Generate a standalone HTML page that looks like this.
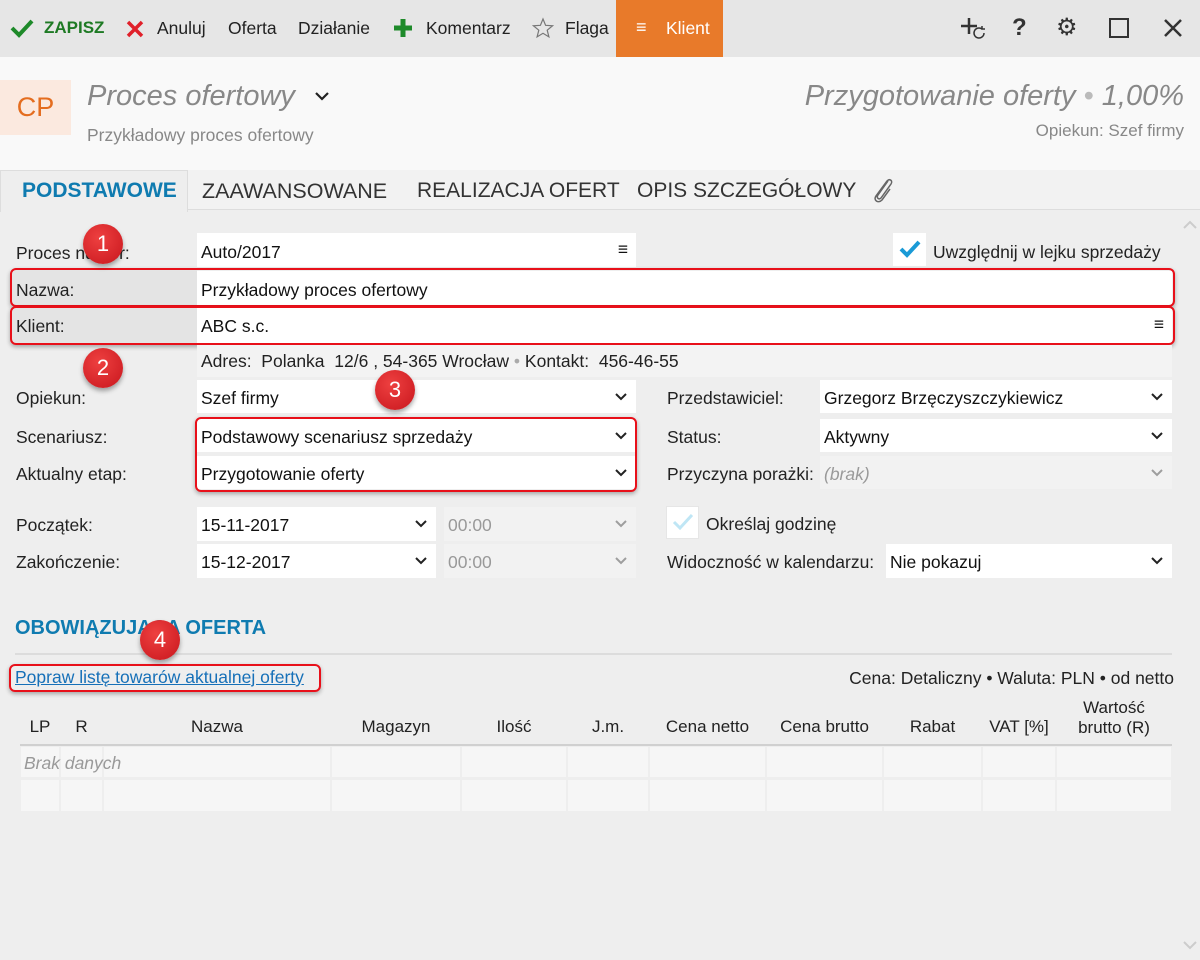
<!DOCTYPE html>
<html><head><meta charset="utf-8"><style>
*{box-sizing:border-box;margin:0;padding:0}
body{width:1200px;height:960px;overflow:hidden;background:#eeeeee;font-family:"Liberation Sans",sans-serif;font-size:17.5px;color:#222;position:relative}
.a{position:absolute;white-space:nowrap}
.tb{top:0;left:0;width:1200px;height:57px;background:#e6e6e6}
.inp{position:absolute;background:#fff;height:34px;padding:8px 4px 0;font-size:17.5px;color:#111;white-space:nowrap}
.dis{background:#f2f2f2;color:#999}
.chev{position:absolute;right:8px;top:8px}
.lbl{position:absolute;font-size:17.5px;color:#222;white-space:nowrap}
.red{position:absolute;border:2px solid #e8101a;border-radius:6px;box-shadow:0 2px 4px rgba(0,0,0,.3)}
.circ{position:absolute;width:40px;height:40px;border-radius:50%;background:radial-gradient(circle at 40% 35%,#ee4040,#c8161d);color:#fff;font-size:22px;text-align:center;line-height:40px;box-shadow:0 3px 5px rgba(0,0,0,.35)}
.th{position:absolute;top:717px;font-size:17px;text-align:center}
.cell{position:absolute;background:#f6f6f6}
</style></head><body>
<div class="a tb"></div>
<svg class="a" style="left:10px;top:18px" width="24" height="20"><path d="M2 10 L9 17 L22 3" stroke="#1e8a2a" stroke-width="4" fill="none"/></svg>
<div class="a" style="left:44px;top:18px;color:#1e7a24;font-weight:bold;font-size:17px">ZAPISZ</div>
<svg class="a" style="left:126px;top:20px" width="18" height="18"><path d="M2 2L16 16M16 2L2 16" stroke="#e0202a" stroke-width="3.5"/></svg>
<div class="a" style="left:157px;top:18px">Anuluj</div>
<div class="a" style="left:228px;top:18px">Oferta</div>
<div class="a" style="left:298px;top:18px">Działanie</div>
<svg class="a" style="left:393px;top:18px" width="20" height="20"><path d="M10 1V19M1 10H19" stroke="#1e8a2a" stroke-width="5"/></svg>
<div class="a" style="left:426px;top:18px">Komentarz</div>
<svg class="a" style="left:532px;top:17px" width="22" height="22"><path d="M11 2L13.6 8.3 20.5 8.8 15.2 13.2 16.9 19.9 11 16.3 5.1 19.9 6.8 13.2 1.5 8.8 8.4 8.3Z" stroke="#777" stroke-width="1.2" fill="none"/></svg>
<div class="a" style="left:565px;top:18px">Flaga</div>
<div class="a" style="left:616px;top:0;width:107px;height:57px;background:#e87a2a"></div>
<div class="a" style="left:636px;top:17px;color:#fff;font-size:18px">≡</div>
<div class="a" style="left:666px;top:18px;color:#fff">Klient</div>
<svg class="a" style="left:960px;top:16px" width="28" height="26"><path d="M9 2V18M1 10H17" stroke="#333" stroke-width="2.5"/><path d="M24 17a5 5 0 1 1-2-4M22 10v3h3" stroke="#333" stroke-width="1.5" fill="none"/></svg>
<div class="a" style="left:1012px;top:14px;font-size:24px;font-weight:bold;color:#333">?</div>
<div class="a" style="left:1056px;top:13px;font-size:24px;color:#333">⚙</div>
<div class="a" style="left:1109px;top:18px;width:20px;height:20px;border:2.5px solid #333"></div>
<svg class="a" style="left:1163px;top:18px" width="20" height="20"><path d="M2 2L18 18M18 2L2 18" stroke="#333" stroke-width="2.5"/></svg>

<div class="a" style="left:0;top:57px;width:1200px;height:113px;background:#f9f9f9"></div>
<div class="a" style="left:0;top:80px;width:71px;height:55px;background:#fbe9df;color:#e46d1f;font-size:27px;text-align:center;line-height:55px">CP</div>
<div class="a" style="left:87px;top:80px;font-size:29px;font-style:italic;color:#888">Proces ofertowy</div>
<svg class="a" style="left:314px;top:90px" width="16" height="12"><path d="M2 3L8 9 14 3" stroke="#222" stroke-width="2.2" fill="none"/></svg>
<div class="a" style="left:87px;top:125px;font-size:17.5px;color:#888">Przykładowy proces ofertowy</div>
<div class="a" style="right:16px;top:80px;font-size:29px;font-style:italic;color:#888">Przygotowanie oferty <span style="color:#bbb">•</span> 1,00%</div>
<div class="a" style="right:16px;top:121px;font-size:17px;color:#888">Opiekun: Szef firmy</div>

<div class="a" style="left:0;top:170px;width:1200px;height:40px;background:#f2f2f2;border-bottom:1px solid #ddd"></div>
<div class="a" style="left:0;top:170px;width:188px;height:42px;background:#eeeeee;border:1px solid #ddd;border-bottom:none"></div>
<div class="a" style="left:22px;top:179px;font-size:21px;font-weight:bold;color:#0f7bb0">PODSTAWOWE</div>
<div class="a" style="left:202px;top:179px;font-size:21.5px;color:#333">ZAAWANSOWANE</div>
<div class="a" style="left:417px;top:179px;font-size:21px;color:#333">REALIZACJA OFERT</div>
<div class="a" style="left:637px;top:179px;font-size:21px;color:#333">OPIS SZCZEGÓŁOWY</div>
<svg class="a" style="left:870px;top:176px" width="26" height="28"><path d="M18 5L8 19C6 22 9 24 11 22L21 8C23 5 20 2 17 5L6 20C3 24 8 28 12 24L20 13" stroke="#666" stroke-width="1.5" fill="none"/></svg>

<svg class="a" style="left:1182px;top:220px" width="16" height="10"><path d="M2 8L8 2 14 8" stroke="#ccc" stroke-width="2" fill="none"/></svg>
<svg class="a" style="left:1182px;top:940px" width="16" height="10"><path d="M2 2L8 8 14 2" stroke="#ccc" stroke-width="2" fill="none"/></svg>

<div class="lbl" style="left:16px;top:243px">Proces numer:</div>
<div class="inp" style="left:197px;top:233px;width:439px;padding-top:9px">Auto/2017<span class="chev" style="top:6px">≡</span></div>
<div class="a" style="left:893px;top:233px;width:33px;height:33px;background:#fff"></div>
<svg class="a" style="left:898px;top:238px" width="24" height="22"><path d="M3 11L9 17 21 4" stroke="#1a9ad6" stroke-width="4" fill="none"/></svg>
<div class="lbl" style="left:933px;top:242px">Uwzględnij w lejku sprzedaży</div>

<div class="a" style="left:12px;top:270px;width:185px;height:35px;background:#e4e4e4"></div>
<div class="lbl" style="left:16px;top:280px">Nazwa:</div>
<div class="inp" style="left:197px;top:271px;width:975px;height:34px;padding-top:9px">Przykładowy proces ofertowy</div>
<div class="red" style="left:10px;top:268px;width:1165px;height:39px"></div>

<div class="a" style="left:12px;top:308px;width:185px;height:35px;background:#e4e4e4"></div>
<div class="lbl" style="left:16px;top:316px">Klient:</div>
<div class="inp" style="left:197px;top:308px;width:975px;height:35px">ABC s.c.<span class="chev" style="top:6px">≡</span></div>
<div class="red" style="left:10px;top:306px;width:1165px;height:39px"></div>

<div class="a" style="left:197px;top:345px;width:975px;height:32px;background:#f3f3f3"></div>
<div class="lbl" style="left:201px;top:351px">Adres:&nbsp; Polanka&nbsp; 12/6 , 54-365 Wrocław <span style="color:#aaa">•</span> Kontakt:&nbsp; 456-46-55</div>

<svg width="0" height="0" style="position:absolute"><defs><path id="cv" d="M2 3L7 8 12 3" stroke="#222" stroke-width="2" fill="none"/></defs></svg>

<div class="lbl" style="left:16px;top:388px">Opiekun:</div>
<div class="inp" style="left:197px;top:380px;width:439px;height:33px">Szef firmy<svg class="chev" style="top:11px" width="14" height="10"><use href="#cv"/></svg></div>
<div class="lbl" style="left:16px;top:427px">Scenariusz:</div>
<div class="inp" style="left:197px;top:419px;width:439px;height:33px">Podstawowy scenariusz sprzedaży<svg class="chev" style="top:11px" width="14" height="10"><use href="#cv"/></svg></div>
<div class="lbl" style="left:16px;top:464px">Aktualny etap:</div>
<div class="inp" style="left:197px;top:456px;width:439px;height:33px">Przygotowanie oferty<svg class="chev" style="top:11px" width="14" height="10"><use href="#cv"/></svg></div>
<div class="red" style="left:195px;top:417px;width:442px;height:75px"></div>

<div class="lbl" style="left:667px;top:388px">Przedstawiciel:</div>
<div class="inp" style="left:820px;top:380px;width:352px;height:33px">Grzegorz Brzęczyszczykiewicz<svg class="chev" style="top:11px" width="14" height="10"><use href="#cv"/></svg></div>
<div class="lbl" style="left:667px;top:427px">Status:</div>
<div class="inp" style="left:820px;top:419px;width:352px;height:33px">Aktywny<svg class="chev" style="top:11px" width="14" height="10"><use href="#cv"/></svg></div>
<div class="lbl" style="left:667px;top:464px">Przyczyna porażki:</div>
<div class="inp dis" style="left:820px;top:456px;width:352px;height:33px;font-style:italic">(brak)<svg class="chev" style="top:11px;opacity:.4" width="14" height="10"><use href="#cv"/></svg></div>

<div class="lbl" style="left:16px;top:515px">Początek:</div>
<div class="inp" style="left:197px;top:507px;width:239px;height:34px">15-11-2017<svg class="chev" style="top:11px" width="14" height="10"><use href="#cv"/></svg></div>
<div class="inp dis" style="left:444px;top:507px;width:192px;height:34px">00:00<svg class="chev" style="top:11px;opacity:.4" width="14" height="10"><use href="#cv"/></svg></div>
<div class="lbl" style="left:16px;top:552px">Zakończenie:</div>
<div class="inp" style="left:197px;top:544px;width:239px;height:34px">15-12-2017<svg class="chev" style="top:11px" width="14" height="10"><use href="#cv"/></svg></div>
<div class="inp dis" style="left:444px;top:544px;width:192px;height:34px">00:00<svg class="chev" style="top:11px;opacity:.4" width="14" height="10"><use href="#cv"/></svg></div>

<div class="a" style="left:666px;top:506px;width:33px;height:33px;background:#fff;border:1px solid #e6e6e6"></div>
<svg class="a" style="left:671px;top:511px" width="24" height="22"><path d="M3 11L9 17 21 4" stroke="#bfe6f5" stroke-width="3" fill="none"/></svg>
<div class="lbl" style="left:706px;top:514px">Określaj godzinę</div>
<div class="lbl" style="left:667px;top:552px">Widoczność w kalendarzu:</div>
<div class="inp" style="left:886px;top:544px;width:286px;height:34px">Nie pokazuj<svg class="chev" style="top:11px" width="14" height="10"><use href="#cv"/></svg></div>

<div class="a" style="left:15px;top:617px;font-size:20px;font-weight:bold;color:#0f7bb0">OBOWIĄZUJĄCA OFERTA</div>
<div class="a" style="left:15px;top:653px;width:1157px;height:2px;background:#dcdcdc"></div>
<div class="a" style="left:15px;top:667px;color:#1670b8;text-decoration:underline">Popraw listę towarów aktualnej oferty</div>
<div class="red" style="left:9px;top:664px;width:312px;height:28px"></div>
<div class="a" style="right:26px;top:668px">Cena: Detaliczny • Waluta: PLN • od netto</div>

<div class="th" style="left:20px;width:40px">LP</div>
<div class="th" style="left:60px;width:43px">R</div>
<div class="th" style="left:103px;width:228px">Nazwa</div>
<div class="th" style="left:331px;width:130px">Magazyn</div>
<div class="th" style="left:461px;width:106px">Ilość</div>
<div class="th" style="left:567px;width:82px">J.m.</div>
<div class="th" style="left:649px;width:117px">Cena netto</div>
<div class="th" style="left:766px;width:117px">Cena brutto</div>
<div class="th" style="left:883px;width:99px">Rabat</div>
<div class="th" style="left:982px;width:74px">VAT [%]</div>
<div class="th" style="left:1056px;width:116px;top:698px;line-height:20px">Wartość<br>brutto (R)</div>
<div class="a" style="left:20px;top:744px;width:1152px;height:2px;background:#d0d0d0"></div>
<div id="rows"></div>
<script>
var b=[20,60,103,331,461,567,649,766,883,982,1056,1172],h='';
[[747,30],[780,31]].forEach(function(r){for(var i=0;i<b.length-1;i++)h+='<div class="cell" style="left:'+(b[i]+1)+'px;top:'+r[0]+'px;width:'+(b[i+1]-b[i]-2)+'px;height:'+r[1]+'px"></div>';});
document.getElementById('rows').innerHTML=h;
</script>
<div class="a" style="left:24px;top:753px;font-style:italic;color:#999">Brak danych</div>

<div class="circ" style="left:83px;top:224px">1</div>
<div class="circ" style="left:83px;top:348px">2</div>
<div class="circ" style="left:375px;top:370px">3</div>
<div class="circ" style="left:140px;top:620px">4</div>
</body></html>
